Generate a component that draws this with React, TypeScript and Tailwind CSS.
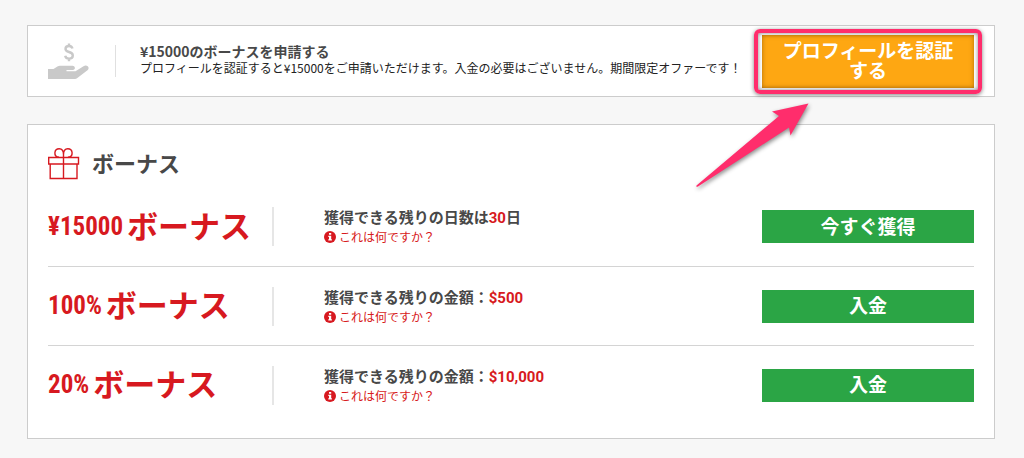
type Bonus = {
  id: string;
  amount: string;
  label: string;
  value: string;
  suffix?: string;
  action: string;
};

const bonuses: Bonus[] = [
  {
    id: "welcome",
    amount: "¥15000",
    label: "獲得できる残りの日数は",
    value: "30",
    suffix: "日",
    action: "今すぐ獲得",
  },
  {
    id: "first",
    amount: "100%",
    label: "獲得できる残りの金額：",
    value: "$500",
    action: "入金",
  },
  {
    id: "second",
    amount: "20%",
    label: "獲得できる残りの金額：",
    value: "$10,000",
    action: "入金",
  },
];

export default function App() {
  return (
    <main className="min-h-screen bg-[#f7f7f7] pt-[25px] pr-[29px] pb-5 pl-[27px] font-['Noto_Sans_CJK_JP',sans-serif] text-[#484848]">
      {/* Offer banner */}
      <section className="flex h-[72px] items-center border border-[#cccccc] bg-white px-5">
        <div className="flex h-8 w-[68px] shrink-0 items-center border-r border-[#e0e0e0]">
          <HandIcon />
        </div>
        <div className="min-w-0 flex-1 pb-1 pl-6">
          <h2 className="text-[14px] leading-[18px] font-bold">
            ¥15000のボーナスを申請する
          </h2>
          <p className="text-[12px] leading-[16px] whitespace-nowrap text-[#222222]">
            プロフィールを認証すると¥15000をご申請いただけます。入金の必要はございません。期間限定オファーです！
          </p>
        </div>
        <div className="relative w-[212px] shrink-0">
          <button className="block h-[53px] w-full bg-[#fea712] px-4 pb-[2px] text-[19px] leading-[20px] font-bold text-white shadow-[inset_0_0_5px_rgba(120,70,0,0.55)]">
            プロフィールを認証する
          </button>
          <div className="pointer-events-none absolute -inset-x-2 -top-[6px] -bottom-[6px] rounded-md border-4 border-[#ff2d6c] shadow-[0_1px_4px_rgba(0,0,0,0.5),inset_0_0_4px_rgba(0,0,0,0.5)]" />
          <PointerArrow />
        </div>
      </section>

      {/* Bonus list */}
      <section className="mt-[27px] border border-[#cccccc] bg-white px-5 pb-[14px]">
        <div className="flex h-[62px] items-center gap-3 pt-4">
          <GiftIcon />
          <h1 className="pb-1 text-[22px] leading-8 font-bold">ボーナス</h1>
        </div>
        <ul>
          {bonuses.map((b) => (
            <BonusRow key={b.id} bonus={b} />
          ))}
        </ul>
      </section>
    </main>
  );
}

function BonusRow({ bonus }: { bonus: Bonus }) {
  return (
    <li className="flex h-[79px] items-center border-t border-[#d4d4d4] first:border-t-0">
      <div className="flex h-[39px] w-[226px] shrink-0 items-center gap-1 border-r-2 border-[#e6e6e6] font-bold whitespace-nowrap text-[#d71920]">
        <span className="font-['Roboto_Condensed',Roboto,sans-serif] text-[25px] leading-8">
          {bonus.amount}
        </span>
        <span className="pb-1 text-[31px] leading-8">ボーナス</span>
      </div>
      <div className="min-w-0 flex-1 pl-[50px]">
        <p className="text-[15px] leading-5 font-bold">
          {bonus.label}
          <span className="font-[Roboto,sans-serif] text-[#d71920]">
            {bonus.value}
          </span>
          {bonus.suffix}
        </p>
        <a
          href="#"
          className="flex items-center gap-[3px] text-[12px] leading-[18px] text-[#d71920]"
        >
          <InfoIcon />
          これは何ですか？
        </a>
      </div>
      <button className="h-[33px] w-[212px] shrink-0 bg-[#2ba545] pb-[2px] text-[19px] leading-[20px] font-bold text-white">
        {bonus.action}
      </button>
    </li>
  );
}

function HandIcon() {
  return (
    <svg viewBox="0 0 42 38" className="h-[38px] w-[42px]" fill="none">
      <path
        d="M24.500 6.500C24 4.800 22.800 4 21 4C18.900 4 17.500 5.200 17.500 7C17.500 11 24.800 9 24.800 13.400C24.800 15.400 23.300 16.600 21.100 16.600C19 16.600 17.600 15.600 17.200 13.700M21 1.500V4M21 16.600V19.200"
        stroke="#c9c9c9"
        strokeWidth="2.400"
      />
      <path
        d="M0 27H5.500L9 24.800C10.200 24 11.500 23.700 13 23.700H24.500C27.500 23.700 27.800 27.800 24.800 28H18.500V29.200H27.500L35.500 24.200C38.800 22.300 42.200 25.300 39.800 28L30 35.500C28.700 36.500 27.500 37 26 37H0Z"
        fill="#c9c9c9"
      />
    </svg>
  );
}

function GiftIcon() {
  return (
    <svg
      viewBox="0 0 32 34"
      className="h-[34px] w-8"
      fill="none"
      stroke="#d71920"
      strokeWidth="1.400"
    >
      <path d="M0.700 10.500H30.500V17H0.700ZM2.200 17V31.500H29V17M15.500 10.500V31.500" />
      <path d="M11 10.300C5 9.500 6 1.700 11.200 1.700C14 1.700 15.500 4 15.500 7.500V10.500M20 10.300C26 9.500 25 1.700 19.800 1.700C17 1.700 15.500 4 15.500 7.500" />
    </svg>
  );
}

function InfoIcon() {
  return (
    <svg viewBox="0 0 12 12" className="h-3 w-3">
      <circle cx="6" cy="6" r="6" fill="#d71920" />
      <path
        d="M5 2H7.200V3.800H5ZM4.300 4.800H7.200V8.200H7.900V9.500H4.300V8.200H5V6H4.300Z"
        fill="#fff"
      />
    </svg>
  );
}

function PointerArrow() {
  return (
    <svg
      viewBox="0 0 120 92"
      className="pointer-events-none absolute top-[64px] -left-[70px] h-[92px] w-[120px] drop-shadow-[1px_2px_2px_rgba(0,0,0,0.45)]"
    >
      <path
        d="M116.500 4.500L80 12.500L87 17L4.500 86.500C4 87.500 4.500 88 6 87.500L97 28.500L98.500 36.500Z"
        fill="#ff2d6c"
      />
    </svg>
  );
}
